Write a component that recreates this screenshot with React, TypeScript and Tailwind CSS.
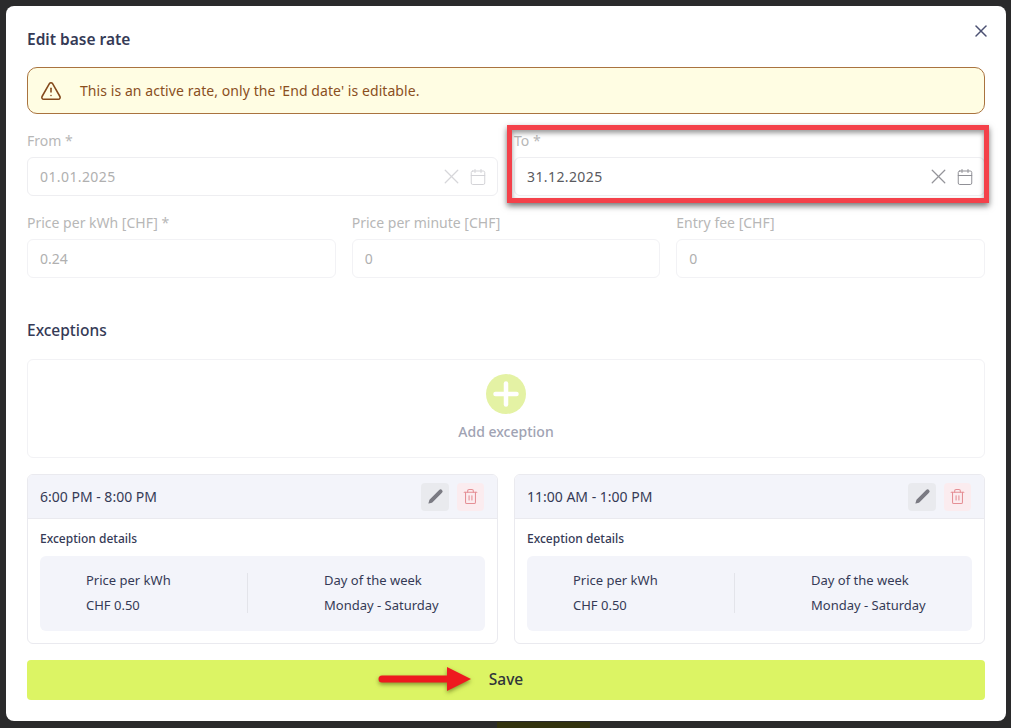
import { X, Calendar, TriangleAlert, Pencil, Trash2, Plus } from "lucide-react";

const font = "font-['Noto_Sans','Open_Sans',sans-serif]";

function DateField({ label, value, disabled }: { label: string; value: string; disabled?: boolean }) {
  return (
    <div className="flex flex-col">
      <label className="h-[26px] text-[14px] leading-[19px] text-[#b7b7b7]">{label}</label>
      <div className="h-[39px] flex items-center rounded-[6px] border border-[#eeeef1] pl-[12px] pr-[10px]">
        <span className={`flex-1 text-[14px] tracking-[0.4px] ${disabled ? "text-[#b0b0b0]" : "text-[#5a5a60]"}`}>{value}</span>
        <X size={25} strokeWidth={1.25} className={disabled ? "text-[#d6d6da] mr-[5px]" : "text-[#94949a] mr-[5px]"} />
        <Calendar size={18} strokeWidth={1.3} className={disabled ? "text-[#d2d2d6]" : "text-[#8d8d93]"} />
      </div>
    </div>
  );
}

function NumberField({ label, value }: { label: string; value: string }) {
  return (
    <div className="flex flex-col">
      <label className="h-[26px] text-[14px] leading-[19px] text-[#b7b7b7]">{label}</label>
      <div className="h-[39px] flex items-center rounded-[6px] border border-[#f2f2f5] px-[12px] text-[14px] text-[#b0b0b0]">
        {value}
      </div>
    </div>
  );
}

function ExceptionCard({ time }: { time: string }) {
  return (
    <div className="h-[170px] rounded-[6px] border border-[#eaeaef] overflow-hidden">
      <div className="h-[44px] flex items-center justify-between bg-[#f3f4fa] border-b border-[#eaeaef] pl-[12px] pr-[13px]">
        <span className="text-[14px] text-[#353a56]">{time}</span>
        <div className="flex gap-[8px]">
          <span className="w-[28px] h-[28px] flex items-center justify-center rounded-[4px] bg-[#e9eaee]">
            <Pencil size={17} strokeWidth={0} className="text-[#7b7b83] fill-[#7b7b83]" />
          </span>
          <span className="w-[27px] h-[28px] flex items-center justify-center rounded-[4px] bg-[#fbecef]">
            <Trash2 size={17} strokeWidth={1.5} className="text-[#e58f95]" />
          </span>
        </div>
      </div>
      <div className="px-[12px] pt-[11px]">
        <div className="text-[12px] leading-[17px] font-medium text-[#353a56]">Exception details</div>
        <div className="mt-[9px] h-[75px] rounded-[6px] bg-[#f3f4fa] flex items-center pb-[2px] text-[13px] text-[#353a56]">
          <div className="w-[207px] pl-[46px] flex flex-col gap-[7px] leading-[18px]">
            <span>Price per kWh</span>
            <span>CHF 0.50</span>
          </div>
          <div className="w-px h-[40px] bg-[#e3e4ea]" />
          <div className="pl-[76px] flex flex-col gap-[7px] leading-[18px]">
            <span>Day of the week</span>
            <span>Monday - Saturday</span>
          </div>
        </div>
      </div>
    </div>
  );
}

export default function App() {
  return (
    <div className={`relative h-[728px] w-[1011px] overflow-hidden bg-[#2a2a2b] pt-[6px] pl-[6px] ${font}`}>
      {/* bit of the dimmed page under the modal */}
      <div className="absolute left-[497px] top-[722px] h-[6px] w-[93px] bg-[#33330f]" />

      <div className="relative w-[1000px] h-[715px] rounded-[8px] bg-white px-[21px] flex flex-col">
        <button className="absolute right-[15px] top-[15px] text-[#4b5072]">
          <X size={20} strokeWidth={1.8} />
        </button>

        <h2 className="h-[61px] pt-[22px] text-[15.5px] leading-[22px] font-semibold text-[#353a56]">Edit base rate</h2>

        <div className="h-[47px] flex items-center rounded-[10px] border border-[#a9733f] bg-[#fffde3] pl-[12px] text-[14px] tracking-[0.07px] text-[#8a4f1e]">
          <TriangleAlert size={22} strokeWidth={1.7} className="text-[#84491b]" />
          <span className="ml-[18px]">This is an active rate, only the 'End date' is editable.</span>
        </div>

        <div className="mt-[17px] grid grid-cols-2 gap-x-[16px]">
          <DateField label="From *" value="01.01.2025" disabled />
          <DateField label="To *" value="31.12.2025" />
        </div>

        <div className="mt-[17px] grid grid-cols-3 gap-x-[16px]">
          <NumberField label="Price per kWh [CHF] *" value="0.24" />
          <NumberField label="Price per minute [CHF]" value="0" />
          <NumberField label="Entry fee [CHF]" value="0" />
        </div>

        <h3 className="mt-[41px] text-[15.5px] leading-[22px] font-medium text-[#353a56]">Exceptions</h3>

        <div className="mt-[18px] h-[99px] rounded-[6px] border border-[#f2f2f5] flex flex-col items-center pt-[14px]">
          <span className="w-[40px] h-[40px] rounded-full bg-[#e4f2a4] flex items-center justify-center">
            <Plus size={36} strokeWidth={3} className="text-white" />
          </span>
          <span className="mt-[8px] text-[14px] leading-[20px] font-medium text-[#a0a3b3]">Add exception</span>
        </div>

        <div className="mt-[16px] grid grid-cols-2 gap-x-[16px]">
          <ExceptionCard time="6:00 PM - 8:00 PM" />
          <ExceptionCard time="11:00 AM - 1:00 PM" />
        </div>

        <button className="mt-[16px] h-[40px] rounded-[4px] bg-[#dcf464] text-[15.5px] font-medium text-[#30343a]">Save</button>
      </div>

      {/* annotation: highlight round the To field */}
      <div className="absolute left-[507px] top-[125px] w-[482px] h-[78px] border-[5px] border-[#f4414a] shadow-[0_3px_6px_rgba(0,0,0,0.55),inset_0_3px_5px_rgba(0,0,0,0.4)]" />

      {/* annotation: arrow pointing at Save */}
      <svg className="absolute left-[376px] top-[664px] drop-shadow-[0_2px_2px_rgba(60,70,0,0.55)]" width="98" height="32" viewBox="0 0 98 32">
        <path d="M6 11.5H71V3L95 15L71 27V18.5H6Q2.5 18.5 2.5 15Q2.5 11.5 6 11.5Z" fill="#ee1a1f" />
      </svg>
    </div>
  );
}
